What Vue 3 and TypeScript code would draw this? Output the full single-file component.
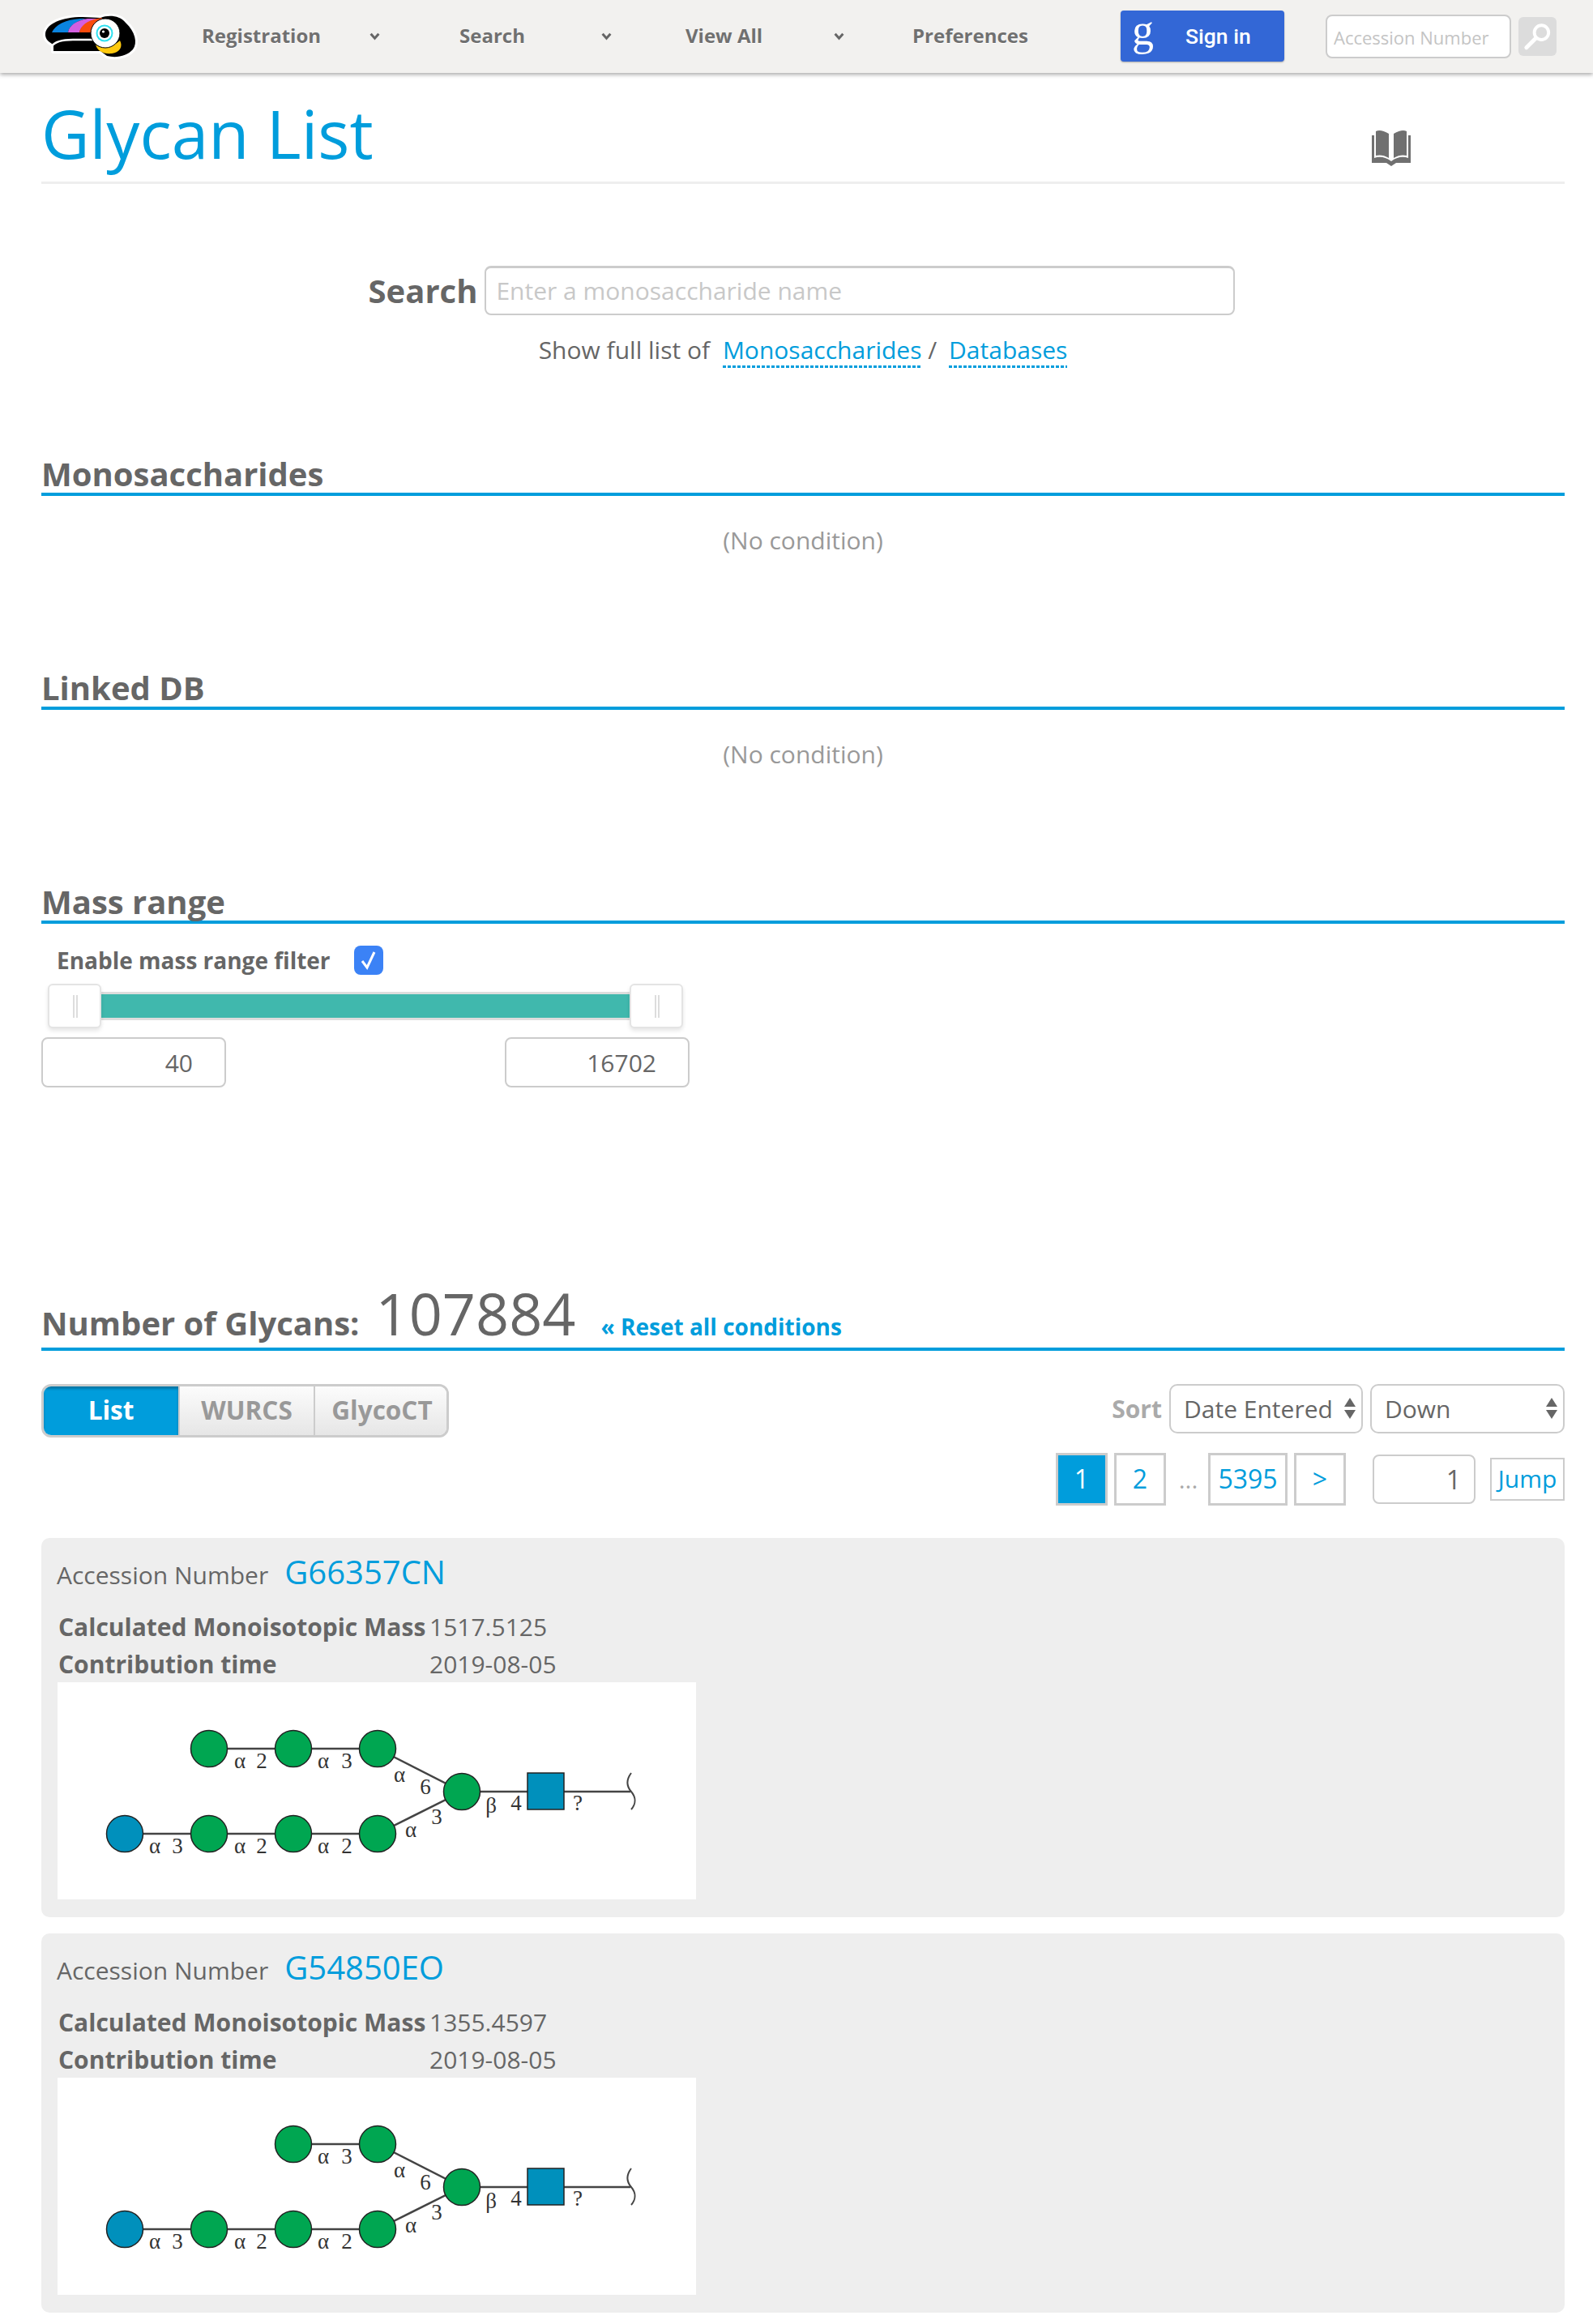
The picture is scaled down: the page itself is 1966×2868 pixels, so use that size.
<script setup lang="ts">
interface GlycanNode { x: number; y: number; blue?: boolean }
interface Label { x: number; y: number; t: string }
interface Card { id: string; mass: string; date: string; nodes: GlycanNode[]; labels: Label[] }

const navItems = [
  { label: 'Registration', cls: 'w-reg' },
  { label: 'Search', cls: 'w-search' },
  { label: 'View All', cls: 'w-view' },
]

const X = [83, 187, 291, 395]
const coreLabels: Label[] = [
  { x: 422, y: 123, t: 'α' }, { x: 454, y: 138, t: '6' },
  { x: 468, y: 175, t: '3' }, { x: 436, y: 191, t: 'α' },
  { x: 535, y: 161, t: 'β' }, { x: 566, y: 158, t: '4' }, { x: 642, y: 158, t: '?' },
  { x: 120, y: 211, t: 'α' }, { x: 148, y: 211, t: '3' },
  { x: 225, y: 211, t: 'α' }, { x: 252, y: 211, t: '2' },
  { x: 328, y: 211, t: 'α' }, { x: 357, y: 211, t: '2' },
  { x: 328, y: 106, t: 'α' }, { x: 357, y: 106, t: '3' },
]
const coreNodes: GlycanNode[] = [
  { x: X[0], y: 187, blue: true }, { x: X[1], y: 187 }, { x: X[2], y: 187 }, { x: X[3], y: 187 },
  { x: X[2], y: 82 }, { x: X[3], y: 82 },
]

const cards: Card[] = [
  {
    id: 'G66357CN', mass: '1517.5125', date: '2019-08-05',
    nodes: [{ x: X[1], y: 82 }, ...coreNodes],
    labels: [{ x: 225, y: 106, t: 'α' }, { x: 252, y: 106, t: '2' }, ...coreLabels],
  },
  {
    id: 'G54850EO', mass: '1355.4597', date: '2019-08-05',
    nodes: coreNodes,
    labels: coreLabels,
  },
]
</script>

<template>
  <div class="root">
    <header class="nav">
      <svg class="logo" viewBox="0 0 140 80" width="140" height="80" aria-label="GlyTouCan logo">
        <path d="M16 36C18 24 36 16 62 16L84 17C94 13 108 14 115 23C127 34 130 48 124 56C117 64 104 67 92 64L84 58L26 58L26 50C22 48 15 44 16 36Z" fill="#000" stroke="#fff" stroke-width="6" stroke-linejoin="round" paint-order="stroke" />
        <path d="M24 35C28 26 40 19 60 18L66 18C52 22 45 28 44 35Z" fill="#0a84e0" />
        <path d="M44 35C45 27 54 20 68 18L82 18C70 20 60 27 58 35Z" fill="#d45fe0" />
        <path d="M58 35C59 27 68 20 80 18L86 17L84 35Z" fill="#f94b0c" />
        <path d="M24 52C28 46 38 44 50 44L78 44" fill="none" stroke="#fff" stroke-width="2.4" />
        <path d="M78 50C84 56 98 54 108 45C112 52 108 60 98 61C88 62 80 58 78 50Z" fill="#ffc90e" />
        <circle cx="90" cy="36" r="18" fill="#fff" stroke="#000" stroke-width="1" />
        <circle cx="89" cy="36" r="10.5" fill="#2fe0f0" />
        <circle cx="89" cy="36" r="8.5" fill="#fff" />
        <circle cx="89" cy="36" r="6" fill="#000" />
        <circle cx="87.5" cy="34" r="1.6" fill="#fff" />
      </svg>
      <nav class="menu">
        <div v-for="item in navItems" :key="item.label" class="menu-item" :class="item.cls">
          <span>{{ item.label }}</span>
          <svg class="chev" viewBox="0 0 12 10" width="13" height="11"><path d="M1.5 2.5L6 7.5L10.5 2.5" fill="none" stroke="#666" stroke-width="2.8" /></svg>
        </div>
        <div class="menu-item w-pref"><span>Preferences</span></div>
      </nav>
      <button class="signin"><span class="g">g</span><span class="signin-text">Sign in</span></button>
      <input class="acc-input" placeholder="Accession Number" />
      <div class="acc-btn">
        <svg viewBox="0 0 48 48" width="47" height="48">
          <circle cx="29" cy="19" r="9" fill="none" stroke="#fff" stroke-width="4" />
          <path d="M22 26L10 38" stroke="#fff" stroke-width="5" stroke-linecap="round" />
        </svg>
      </div>
    </header>

    <main class="page">
      <div class="title-row">
        <h1>Glycan List</h1>
        <svg class="book" viewBox="0 0 50 48" width="50" height="48" aria-label="Guide">
          <path d="M6 4C10 2 15 3 22 7V37C16 33 10 33 6 34Z" fill="#707070" />
          <path d="M44 4C40 2 35 3 28 7V37C34 33 40 33 44 34Z" fill="#707070" />
          <path d="M1 9H4V37C10 35 17 35 25 41C33 35 40 35 46 37V9H49V43H31L25 47L19 43H1Z" fill="#707070" />
        </svg>
      </div>

      <div class="search-row">
        <label>Search</label>
        <input class="search-input" placeholder="Enter a monosaccharide name" />
      </div>
      <p class="hint">
        Show full list of <a class="dotted first">Monosaccharides</a> / <a class="dotted second">Databases</a>
      </p>

      <section class="sec first-sec">
        <h2>Monosaccharides</h2>
        <p class="none">(No condition)</p>
      </section>
      <section class="sec linked">
        <h2>Linked DB</h2>
        <p class="none">(No condition)</p>
      </section>
      <section class="sec mass">
        <h2>Mass range</h2>
        <div class="enable">
          <span>Enable mass range filter</span>
          <span class="check">
            <svg viewBox="0 0 36 36" width="36" height="36"><path d="M10 19L16 27L25 8" fill="none" stroke="#fff" stroke-width="3" /></svg>
          </span>
        </div>
        <div class="slider">
          <div class="track"></div>
          <div class="handle left"><i></i></div>
          <div class="handle right"><i></i></div>
        </div>
        <div class="range">
          <input class="num" value="40" readonly />
          <input class="num" value="16702" readonly />
        </div>
      </section>

      <div class="count">
        <span class="count-label">Number of Glycans:</span>
        <span class="count-num">107884</span>
        <a class="reset">« Reset all conditions</a>
      </div>

      <div class="toolbar">
        <div class="tabs">
          <div class="tab active">List</div>
          <div class="tab">WURCS</div>
          <div class="tab">GlycoCT</div>
        </div>
        <div class="sort">
          <span class="sort-label">Sort</span>
          <div class="select s1">Date Entered<i class="arrows"></i></div>
          <div class="select s2">Down<i class="arrows"></i></div>
        </div>
      </div>

      <div class="pager">
        <a class="pg on">1</a>
        <a class="pg">2</a>
        <span class="dots">...</span>
        <a class="pg wide">5395</a>
        <a class="pg">&gt;</a>
        <input class="jump-input" value="1" readonly />
        <a class="jump">Jump</a>
      </div>

      <article v-for="c in cards" :key="c.id" class="card">
        <div class="acc"><span class="acc-label">Accession Number</span><a class="acc-id">{{ c.id }}</a></div>
        <div class="meta">
          <b>Calculated Monoisotopic Mass</b><span>{{ c.mass }}</span>
          <b>Contribution time</b><span>{{ c.date }}</span>
        </div>
        <svg class="glycan" viewBox="0 0 788 268" width="788" height="268">
          <g stroke="#444" stroke-width="2.5" fill="none">
            <path d="M395 187L499 135L395 82" />
            <path :d="c.nodes.length === 7 ? 'M187 82H395' : 'M291 82H395'" />
            <path d="M83 187H395M499 135H707" />
            <path d="M708 112C702 120 702 128 708 135C714 142 714 150 708 157" stroke-width="2" />
          </g>
          <circle v-for="(n, i) in c.nodes" :key="i" :cx="n.x" :cy="n.y" r="22.5" :fill="n.blue ? '#0090bc' : '#00a651'" stroke="#222" stroke-width="1.5" />
          <circle cx="499" cy="135" r="22.5" fill="#00a651" stroke="#222" stroke-width="1.5" />
          <rect x="580" y="112" width="45" height="45" fill="#0090bc" stroke="#222" stroke-width="1.5" />
          <text v-for="(l, i) in c.labels" :key="i" :x="l.x" :y="l.y" class="lbl">{{ l.t }}</text>
        </svg>
      </article>
    </main>
  </div>
</template>

<style>
html, body { margin: 0; background: #fff; }
</style>

<style scoped>
.root { width: 1966px; font-family: "Open Sans", "Noto Sans", sans-serif; color: #666; font-size: 30px; height: 2868px; overflow: hidden; }

.nav { height: 90px; background: #f2f1ef; box-shadow: 0 2px 5px rgba(0,0,0,.35); display: flex; align-items: center; padding-left: 40px; position: relative; box-sizing: border-box; }
.logo { flex: none; width: 140px; height: 80px; }
.menu { display: flex; margin-left: 69px; width: 1134px; flex: none; margin-top: -4px; }
.menu-item { display: flex; align-items: center; font-size: 24px; font-weight: 700; color: #707070; text-shadow: 0 1px 0 #fff; position: relative; }
.w-reg { width: 318px; }
.w-search { width: 279px; }
.w-view { width: 280px; }
.w-pref { width: 257px; }
.chev { position: absolute; left: 207px; top: 12px; }
.w-search .chev { left: 175px; }
.w-view .chev { left: 183px; }

.signin { flex: none; width: 202px; height: 63px; margin-top: -2px; margin-left: 0; background: #3367d6; border: 0; border-radius: 4px; color: #fff; display: flex; align-items: center; padding: 0; box-shadow: 0 1px 2px rgba(0,0,0,.3); }
.g { font-family: "Liberation Serif", serif; font-size: 54px; line-height: 54px; margin-left: 14px; width: 31px; margin-top: -14px; text-align: left; }
.signin-text { font-family: Roboto, sans-serif; font-weight: 500; font-size: 26.5px; margin-left: 35px; }

.acc-input { flex: none; box-sizing: border-box; width: 229px; height: 54px; margin-left: 51px; margin-top: -1px; border: 2px solid #ccc; border-radius: 8px; background: #fff; font: 400 22px "Open Sans", sans-serif; padding: 2px 8px 0; outline: 0; }
.acc-input::placeholder { color: #c4c4c4; opacity: 1; }
.acc-btn { flex: none; width: 47px; height: 48px; margin-left: 9px; background: #dcdcdc; border-radius: 6px; }
.acc-btn svg { display: block; }

.page { padding: 0 35px 0 51px; }
.title-row { height: 134px; border-bottom: 3px solid #eee; position: relative; display: flex; align-items: center; }
h1 { margin: 0; font-size: 82px; font-weight: 400; color: #009ddc; line-height: 1; margin-top: 13px; }
.book { position: absolute; left: 1641px; top: 68px; }

.search-row { display: flex; justify-content: center; align-items: center; gap: 9px; margin-top: 101px; padding-right: 3px; }
.search-row label { font-size: 40px; font-weight: 700; color: #666; margin-top: 0; }
.search-input { box-sizing: border-box; width: 926px; height: 61px; border: 2px solid #ccc; border-top-width: 3px; border-radius: 8px; padding: 0 12px 2px; font: 400 30px "Open Sans", sans-serif; outline: 0; }
.search-input::placeholder { color: #c8c8c8; opacity: 1; }
.hint { margin: 0; margin-top: 21px; text-align: center; font-size: 30px; line-height: 44px; height: 46px; }
.dotted { color: #009ddc; display: inline-block; line-height: 41px; padding-bottom: 2px; background: repeating-linear-gradient(90deg, #009ddc 0 4px, transparent 4px 6px) left bottom / 100% 3px no-repeat; }
.dotted.first { margin-left: 8px; }
.dotted.second { margin-left: 7px; }

.sec { box-sizing: border-box; height: 264px; }
.first-sec { margin-top: 92px; }
.mass { height: 500px; }
h2 { margin: 0; font-size: 40px; font-weight: 700; line-height: 74px; height: 60px; border-bottom: 4px solid #009ddc; color: #666; box-sizing: content-box; }
.none { margin: 0; text-align: center; color: #999; font-size: 30px; line-height: 44px; margin-top: 33px; }

.enable { display: flex; align-items: center; font-size: 28px; font-weight: 700; padding-left: 19px; gap: 30px; height: 36px; margin-top: 27px; }
.check { width: 36px; height: 36px; background: #3b82f6; border-radius: 8px; display: block; margin-left: -1px; }
.check svg { display: block; }
.slider { position: relative; width: 784px; height: 55px; margin: 11px 0 0 8px; }
.track { position: absolute; left: 40px; right: 40px; top: 10px; height: 35px; background: #40b8ad; border: 3px solid #ddd; border-left: 0; border-right: 0; box-sizing: border-box; }
.handle { position: absolute; top: 0; width: 66px; height: 55px; box-sizing: border-box; background: #fff; border: 2px solid #e4e4e4; border-radius: 6px; box-shadow: 0 3px 5px rgba(0,0,0,.1); }
.handle.left { left: 0; }
.handle.right { right: 0; }
.handle i { position: absolute; left: 29px; top: 12px; width: 6px; height: 28px; border-left: 2px solid #ddd; border-right: 2px solid #ddd; box-sizing: border-box; }
.range { display: flex; justify-content: space-between; width: 800px; margin-top: 11px; }
.num { box-sizing: border-box; width: 228px; height: 62px; border: 2px solid #ccc; border-radius: 8px; text-align: right; padding: 0 39px 0 0; font: 400 30px "Open Sans", sans-serif; color: #666; outline: 0; }

.count { display: flex; align-items: baseline; height: 88px; border-bottom: 4px solid #009ddc; line-height: 1; box-sizing: content-box; margin-top: -1px; }
.count-label { font-size: 40px; font-weight: 700; padding-top: 11px; }
.count-num { font-size: 72px; font-weight: 400; margin-left: 20px; color: #666; line-height: 90px; }
.reset { font-size: 28px; font-weight: 700; color: #009ddc; margin-left: 31px; }

.toolbar { display: flex; justify-content: space-between; margin-top: 41px; height: 66px; }
.tabs { display: flex; box-sizing: border-box; width: 503px; height: 66px; border: 3px solid #ccc; border-radius: 12px; overflow: hidden; }
.tab { flex: none; width: 167px; box-sizing: border-box; text-align: center; line-height: 58px; font-size: 31.5px; font-weight: 700; color: #999; background: linear-gradient(#fcfcfc, #e6e6e6); border-left: 2px solid #ccc; }
.tab.active { width: 166px; background: #009ddc; color: #fff; border-left: 0; box-shadow: inset 0 3px 3px rgba(0,0,0,.25); }
.sort { display: flex; align-items: flex-start; }
.sort-label { font-size: 30px; font-weight: 700; color: #aaa; line-height: 61px; margin-right: 9px; }
.select { position: relative; box-sizing: border-box; height: 61px; border: 2px solid #ccc; border-radius: 10px; line-height: 57px; padding-left: 16px; font-size: 30px; color: #666; }
.s1 { width: 239px; margin-right: 9px; }
.s2 { width: 240px; }
.arrows { position: absolute; right: 7px; top: 15px; width: 0; height: 0; border-left: 7px solid transparent; border-right: 7px solid transparent; border-bottom: 11px solid #666; }
.arrows::after { content: ""; position: absolute; left: -7px; top: 15px; width: 0; height: 0; border-left: 7px solid transparent; border-right: 7px solid transparent; border-top: 11px solid #666; }

.pager { display: flex; justify-content: flex-end; align-items: center; height: 65px; margin-top: 19px; }
.pg { box-sizing: border-box; width: 64px; height: 65px; border: 3px solid #ccc; margin-right: 8px; color: #009ddc; font-size: 32px; line-height: 58px; text-align: center; }
.pg.on { background: #009ddc; color: #fff; }
.pg.wide { width: 98px; }
.dots { color: #aaa; font-size: 30px; width: 44px; box-sizing: border-box; padding-right: 5px; text-align: center; }
.jump-input { box-sizing: border-box; width: 127px; height: 61px; margin-left: 25px; border: 2px solid #ccc; border-radius: 8px; text-align: right; padding: 0 16px 0 0; font: 400 32px "Open Sans", sans-serif; color: #666; outline: 0; }
.jump { box-sizing: border-box; width: 92px; height: 53px; margin-left: 18px; border: 2px solid #ccc; color: #009ddc; font-size: 30px; line-height: 48px; text-align: center; }

.card { box-sizing: border-box; height: 468px; margin-top: 40px; background: #eee; border-radius: 10px; padding: 0 0 0 20px; }
.card + .card { margin-top: 20px; }
.acc { display: flex; align-items: baseline; padding-top: 14px; height: 52px; margin-left: -1px; }
.acc-label { font-size: 30px; }
.acc-id { font-size: 40px; color: #009ddc; margin-left: 20px; }
.meta { display: grid; grid-template-columns: 458px auto; justify-content: start; font-size: 30px; line-height: 46px; margin-left: 1px; margin-top: 21px; height: 91px; }
.meta b { font-weight: 700; }
.glycan { display: block; background: #fff; }
.lbl { font-family: "Liberation Serif", serif; font-size: 27px; fill: #333; text-anchor: middle; }
</style>
